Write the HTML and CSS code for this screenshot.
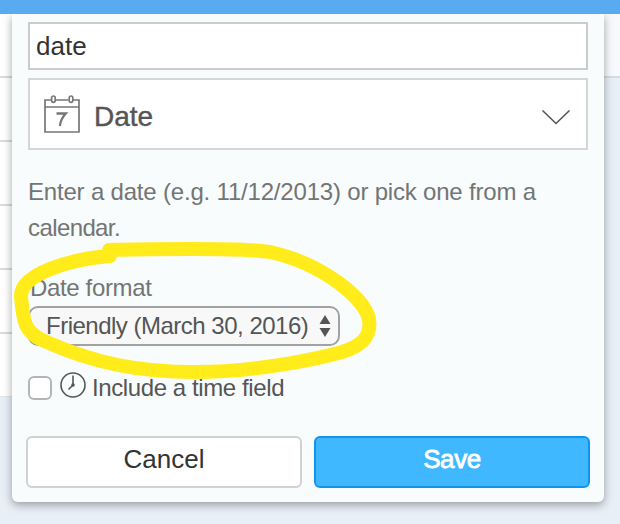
FILE: index.html
```html
<!DOCTYPE html>
<html lang="en">
<head>
    <meta charset="UTF-8">
    <meta name="viewport" content="width=device-width, initial-scale=1.0">
    <title>Date field</title>
    <link rel="stylesheet" href="styles.css">
</head>
<body>
    <div class="topbar"></div>
    <div class="sheet">
        <div class="rows">
            <div class="row"></div>
            <div class="row"></div>
            <div class="row"></div>
            <div class="row"></div>
            <div class="row"></div>
            <div class="row"></div>
        </div>
        <div class="side"></div>
    </div>

    <div class="panel">
        <input class="field-name" type="text" value="date">

        <div class="field-type">
            <svg class="calendar-icon" width="36" height="40" viewBox="0 0 36 40" fill="none" stroke="#777" stroke-width="1.7">
                <path d="M7 5H1v32h34V5h-6M11.500 5h13M1 12h34"/>
                <rect x="7.600" y="1" width="3.600" height="6.400" rx="1.800"/>
                <rect x="25.200" y="1" width="3.600" height="6.400" rx="1.800"/>
                <path d="M12.500 18.500h9.300c-3.300 3.500-5.300 7.500-6 12.500" stroke-width="2.300"/>
            </svg>
            <span class="type-label">Date</span>
            <svg class="chevron" width="30" height="16" viewBox="0 0 30 16" fill="none" stroke="#555" stroke-width="1.6">
                <path d="M1.500 1.500L15 14.500L28.500 1.500"/>
            </svg>
        </div>

        <p class="description">Enter a date (e.g. 11/12/2013) or pick one from a<br><span class="last-word">calendar.</span></p>

        <div class="format">
            <label class="format-label">Date format</label>
            <div class="select">
                <span class="select-value">Friendly (March 30, 2016)</span>
                <svg class="arrows" width="12" height="22" viewBox="0 0 12 22" fill="#555">
                    <path d="M6 0L11.500 9H.5zM6 22L.5 13h11z"/>
                </svg>
            </div>
            <svg class="marker" width="370" height="150" viewBox="0 0 370 150" fill="none" stroke="#ffec1a" stroke-width="14" stroke-linecap="round" stroke-linejoin="round">
                <path d="M100 22C60 25 11 40 11 62C13 88 15 98 32 106C85 130 130 138 185 138C240 138 300 127 332 118C352 112 359.500 103 359.500 90C359.500 65 310 29 260 18C235 14 150 15 99 16"/>
            </svg>
        </div>

        <div class="time-option">
            <span class="checkbox"></span>
            <svg class="clock" width="26" height="26" viewBox="0 0 26 26" fill="none" stroke="#555" stroke-width="1.6">
                <circle cx="13" cy="13" r="12"/>
                <path d="M13 3.500V13l-4.500 4.500"/>
                <circle cx="13" cy="13" r="1" fill="#555"/>
            </svg>
            <span class="time-label">Include a time field</span>
        </div>

        <div class="actions">
            <button class="btn cancel">Cancel</button>
            <button class="btn save">Save</button>
        </div>
    </div>
</body>
</html>
```
FILE: styles.css
```css
* {
    box-sizing: border-box;
}

body {
    margin: 0;
    height: 524px;
    overflow: hidden;
    background: #e8eff7;
    font-family: "Liberation Sans", Arial, sans-serif;
    font-size: 24px;
    color: #666;
    position: relative;
}

.topbar {
    height: 14px;
    background: #58abf0;
}

.sheet {
    display: flex;
    justify-content: space-between;
}

.rows {
    width: 300px;
    background: #fff;
}

.row {
    height: 64px;
    border-bottom: 2px solid #d9dbdd;
}

.row:last-child {
    height: 63px;
    border-bottom: 1px solid #dfe5ec;
}

.side {
    width: 320px;
    height: 64px;
    background: #f7f9fc;
    border-bottom: 2px solid #d9dbdd;
}

/* dialog lies over the sheet */
.panel {
    position: absolute;
    top: 14px;
    left: 12px;
    width: 592px;
    height: 488px;
    padding: 8px 14px 14px;
    display: flex;
    flex-direction: column;
    background: #f8fcfc;
    border-radius: 0 0 6px 6px;
    box-shadow: 0 3px 10px rgba(0, 0, 0, 0.35);
    clip-path: inset(0 -16px -22px -16px);
}

.field-name {
    display: block;
    height: 48px;
    margin: 0 2px;
    padding: 1px 6px 0 6px;
    border: 2px solid #cbcdcd;
    border-radius: 0;
    background: #fff;
    font: inherit;
    font-size: 26px;
    color: #333;
    outline: none;
}

.field-type {
    display: flex;
    align-items: center;
    height: 72px;
    margin: 8px 2px 0;
    padding: 0 15px 0 14px;
    border: 2px solid #d5d7d7;
    background: #fff;
}

.calendar-icon {
    margin-top: 2px;
}

.type-label {
    margin: 5px 0 0 14px;
    font-size: 28px;
    color: #555;
    -webkit-text-stroke: 0.4px #555;
}

.chevron {
    margin: 6px 0 0 auto;
}

.description {
    margin: 24px 2px 0;
    line-height: 36px;
    white-space: nowrap;
    letter-spacing: -0.19px;
    color: #737575;
}

.last-word {
    letter-spacing: -0.6px;
}

.format {
    position: relative;
    margin: 24px 2px 0;
}

.format-label {
    display: block;
    height: 36px;
    line-height: 36px;
    margin-left: 2px;
    letter-spacing: -0.35px;
    color: #737575;
}

.select {
    display: flex;
    align-items: center;
    justify-content: space-between;
    width: 312px;
    height: 40px;
    padding: 0 7px 0 16px;
    border: 2px solid #a2a2a2;
    border-radius: 10px;
    background: #f8f8f8;
    color: #555;
    letter-spacing: -0.5px;
    white-space: nowrap;
}

.arrows {
    flex-shrink: 0;
}

/* hand-drawn highlight over the format setting */
.marker {
    position: absolute;
    top: -36px;
    left: -18px;
}

.time-option {
    display: flex;
    align-items: center;
    height: 32px;
    margin: 24px 2px 0;
    color: #555;
}

.checkbox {
    width: 24px;
    height: 24px;
    margin: 4px 8px 0 0;
    border: 2px solid #b4b5b5;
    border-radius: 6px;
    background: #fff;
}

.clock {
    margin-bottom: 2px;
}

.time-label {
    margin: 4px 0 0 6px;
    letter-spacing: -0.4px;
}

.actions {
    display: flex;
    gap: 12px;
    margin-top: auto;
}

.btn {
    flex: 1;
    height: 52px;
    padding: 0 0 5px;
    border: 2px solid #d0d2d2;
    border-radius: 6px;
    background: #fff;
    font: inherit;
    font-size: 26px;
    color: #333;
}

.save {
    border-color: #0f95f0;
    background: #40b8ff;
    color: #fff;
    letter-spacing: -0.4px;
    -webkit-text-stroke: 0.8px #fff;
}
```
